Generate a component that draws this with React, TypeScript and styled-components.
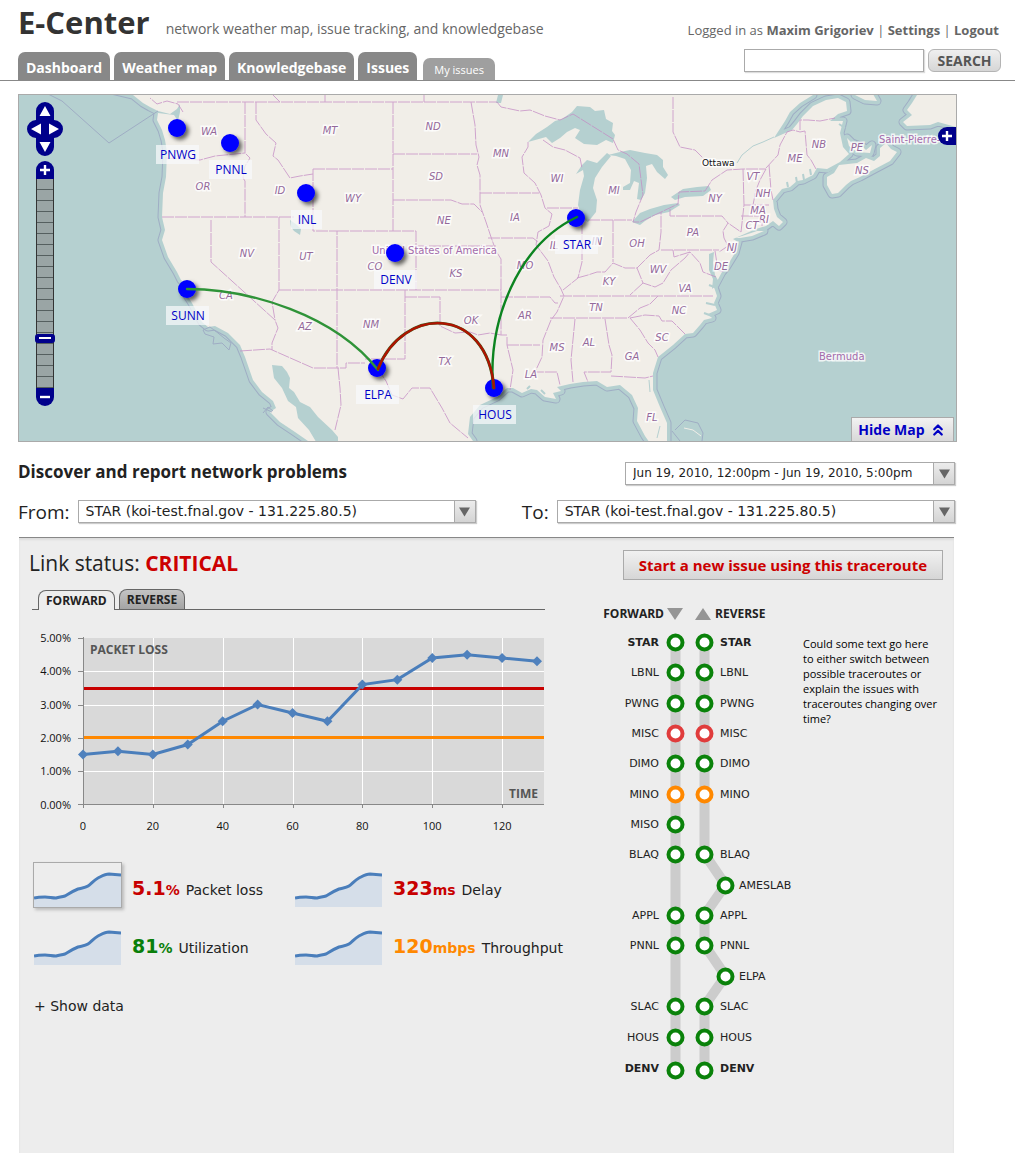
import React, { useState } from "react";
import styled, { createGlobalStyle } from "styled-components";
import { ChevronsUp } from "lucide-react";

const humanist = `"Open Sans", "Noto Sans", sans-serif`;
const wide = `"DejaVu Sans", Verdana, sans-serif`;

const GlobalStyle = createGlobalStyle`
  *, *::before, *::after { box-sizing: border-box; }
  body { margin: 0; background: #fff; color: #222; font-family: ${humanist}; }
  button, input, select { font: inherit; color: inherit; margin: 0; }
  button { cursor: pointer; }
  h1, h2, h3, p, ul { margin: 0; padding: 0; }
  svg { display: block; }
`;

/* ---------- header ---------- */

const Header = styled.header`
  display: flex;
  justify-content: space-between;
  align-items: flex-end;
  height: 81px;
  padding: 0 14px 0 18px;
  border-bottom: 1px solid #888;
`;

const BrandSide = styled.div`
  display: flex;
  flex-direction: column;
  justify-content: space-between;
  height: 80px;
`;

const Brand = styled.div`
  display: flex;
  align-items: baseline;
  gap: 16px;
`;

const Title = styled.h1`
  font-size: 31px;
  line-height: 44px;
  font-weight: 700;
  color: #333;
`;

const Tagline = styled.p`
  font-size: 14px;
  color: #666;
`;

const Nav = styled.nav`
  display: flex;
  align-items: flex-end;
  gap: 4px;
`;

const NavTab = styled.a<{ $small?: boolean }>`
  display: block;
  height: ${(p) => (p.$small ? 22 : 28)}px;
  padding: 0 ${(p) => (p.$small ? 11 : 8)}px;
  margin-left: ${(p) => (p.$small ? 2 : 0)}px;
  border-radius: 7px 7px 0 0;
  background: ${(p) => (p.$small ? "#9f9f9f" : "#888")};
  color: #fff;
  font-size: ${(p) => (p.$small ? 11 : 14)}px;
  line-height: ${(p) => (p.$small ? 24 : 32)}px;
  font-weight: ${(p) => (p.$small ? 400 : 700)};
  text-decoration: none;
`;

const AccountSide = styled.div`
  display: flex;
  flex-direction: column;
  align-items: flex-end;
  gap: 10px;
  padding-bottom: 8px;
`;

const Account = styled.div`
  padding-right: 2px;
  font-size: 13px;
  line-height: 18px;
  color: #666;
  a { color: #666; font-weight: 700; text-decoration: none; }
`;

const SearchForm = styled.form`
  display: flex;
  gap: 4px;
`;

const SearchInput = styled.input`
  width: 180px;
  height: 23px;
  padding: 0 6px;
  border: 1px solid #aaa;
  box-shadow: 1px 1px 1px #ddd;
  font-size: 13px;
`;

const SearchButton = styled.button`
  width: 73px;
  height: 23px;
  padding: 0;
  border: 1px solid #b4b4b4;
  border-radius: 6px;
  background: linear-gradient(#efefef, #d6d6d6);
  color: #555;
  font-size: 14px;
  line-height: 20px;
  font-weight: 700;
`;

/* ---------- map ---------- */

const Main = styled.main`
  padding: 13px 58px 19px 18px;
`;

const MapFrame = styled.section`
  position: relative;
  height: 348px;
  border: 1px solid #aaa;
  overflow: hidden;
  background: #b5d0d0;
`;

const MapSvg = styled.svg`
  width: 100%;
  height: 100%;
`;

const PanPad = styled.div`
  position: absolute;
  left: 8px;
  top: 7px;
`;

const ZoomStack = styled.div`
  position: absolute;
  left: 17px;
  top: 66px;
  display: flex;
  flex-direction: column;
  width: 18px;
`;

const ZoomButton = styled.button<{ $end: "top" | "bottom" }>`
  display: grid;
  place-items: center;
  height: 18px;
  padding: 0;
  border: 0;
  border-radius: ${(p) => (p.$end === "top" ? "9px 9px 0 0" : "0 0 9px 9px")};
  background: #00008b;
`;

const ZoomTrack = styled.div`
  position: relative;
  height: 209px;
  border: solid #333;
  border-width: 0 1px;
  background: repeating-linear-gradient(#9aa5a5 0 10px, #555f5f 10px 11px);
`;

const ZoomThumb = styled.div`
  position: absolute;
  left: -2px;
  top: 155px;
  width: 20px;
  height: 9px;
  border: 3px solid #00008b;
  border-radius: 3px;
  background: #fff;
  background-clip: padding-box;
  &::after {
    content: "";
    position: absolute;
    inset: 0;
    border: solid #00008b;
    border-width: 0 1px 1px;
  }
`;

const LayerButton = styled.button`
  position: absolute;
  right: 0;
  top: 32px;
  display: grid;
  place-items: center;
  width: 18px;
  height: 18px;
  padding: 0;
  border: 0;
  border-radius: 9px 0 0 9px;
  background: #00008b;
`;

const HideMap = styled.button`
  position: absolute;
  right: 2px;
  bottom: 0;
  display: flex;
  align-items: center;
  justify-content: center;
  gap: 4px;
  width: 103px;
  height: 24px;
  padding: 0;
  border: 1px solid #aaa;
  border-bottom: 0;
  background: linear-gradient(#f2f2f2, #d8d8d8);
  color: #0000c4;
  font-size: 14px;
  font-weight: 700;
`;

const LAND =
  "M-20 60 L133 95 143 103 150 107 158 111 170 114 177 109 180 104 180 112 178 121 174 115 158 113 157 120 162 130 165 140 167 152 166 177 163 193 162 217 165 230 162 240 168 257 177 272 181 280 188 285 185 292 192 303 202 322 208 327 215 326 228 333 240 345 245 357 253 380 262 392 273 401 276 408 270 412 280 422 295 432 308 441 308 480 473 480 473 441 468 434 470 417 480 405 497 397 507 388 513 388 522 393 531 389 537 390 545 397 556 399 553 393 561 391 557 387 570 384 583 382 597 381 607 387 620 385 632 395 638 408 637 421 645 436 652 446 667 446 667 423 660 407 653 390 653 373 658 357 673 345 685 334 693 333 700 325 704 320 712 318 708 314 717 310 714 303 717 296 714 287 722 272 727 266 735 253 738 242 733 239 756 229 766 226 773 221 779 226 783 222 777 217 774 209 773 200 777 195 782 189 790 187 797 181 803 180 813 175 817 168 827 169 840 162 849 154 843 147 840 133 843 121 830 121 838 114 847 111 846 102 838 98 826 100 813 106 803 116 797 124 792 130 L774 138 785 121 790 112 800 103 813 95 813 60Z";

const ISLANDS = [
  "M917 95 912 103 907 110 912 115 903 122 907 126 930 125 938 122 956 127 990 127 990 60 917 60Z",
  "M855 95 865 100 877 101 873 94Z",
  "M847 138 852 143 863 147 866 150 872 145 870 153 857 152 849 146Z",
  "M827 177 834 173 839 165 857 163 866 158 874 161 880 156 880 148 886 143 891 149 897 152 890 161 873 170 860 177 851 181 846 185 838 193 832 194 827 185Z",
  "M735 238 742 236 757 231 764 231 752 236 740 238Z",
];

const LAKES = [
  "M528 142 536 134 547 127 555 121 562 119 572 112 577 106 590 107 595 111 604 110 606 119 613 123 612 131 615 135 613 143 606 140 597 145 584 144 575 138 580 130 575 128 567 132 560 138 552 143 546 137Z",
  "M576 174 582 165 587 160 597 163 607 153 611 156 602 167 595 178 593 188 597 200 596 212 588 222 582 218 578 205 580 190 584 176 583 170Z",
  "M608 155 620 152 630 150 645 153 657 155 663 160 663 167 668 175 665 179 657 172 652 164 646 166 647 178 645 193 641 200 637 199 639 183 634 181 630 190 623 190 623 187 630 183 631 170 625 159 616 156Z",
  "M632 222 640 213 650 209 664 205 678 203 680 205 669 212 655 215 645 221 640 225Z",
  "M671 197 683 189 697 187 709 186 711 190 703 196 685 197 675 200Z",
  "M272 365 282 366 287 372 290 378 289 388 294 392 300 402 310 407 318 417 332 430 338 437 338 445 318 445 309 430 298 418 296 407 288 401 282 388 274 378Z",
  "M290 220 297 225 301 229 300 235 294 231 291 227Z",
  "M709 254 714 252 713 263 715 275 719 282 712 289 713 279 709 270Z",
  "M498 95 503 95 501 103 496 103Z",
];

const BORDERS = [
  "M177 102H497 M497 102L501 107 520 111 530 110 545 116 560 120 573 114 613 139 618 150 627 154 639 164 643 195 636 212 633 222 640 222 678 204 679 192 705 191 712 180 727 170 743 169H766",
  "M245 102V153L250 158 245 166 243 178 245 181V217 M165 158L200 160 215 156 235 154 245 153",
  "M162 217H294 M211 220V262L275 320 278 328 272 343 272 350 M279 217V290L272 302 275 320",
  "M256 102V120L266 134 276 143 273 156 278 160 290 178 300 176 313 174 M313 169V231H337V368 M313 169H393",
  "M279 290H501 M337 231H416V290 M416 246H496 M393 102V231 M393 154H477",
  "M240 351L270 349 313 368H346V363H365 M393 200H451L462 204 474 204 482 212",
  "M471 102L475 125 476 145 479 157 477 165 480 175V205L486 222 491 237 496 251 501 259V335H507",
  "M480 193H539 M488 238H533L538 242 M528 142L528 147 522 157 524 173 535 183 541 195 545 208 552 214 549 226 538 232 536 245 548 261 554 277 561 289 564 296 557 312 551 320 543 340 542 357 535 372H557L560 385",
  "M547 208H578 M543 140L553 147 565 150 580 158 582 168 M582 222V262L578 278 563 290 M588 220H632 M613 220V262",
  "M577 278L588 275 597 272 605 272 613 263 625 268 637 268 650 255 659 250 661 232V212 M661 250H719 M670 209V216H722L728 223 723 231 724 238 728 246 719 252",
  "M501 297H550L555 303H558 M507 345H540 M507 337V345L513 370 510 390 M560 296H713 M550 318H628L640 308 650 304 658 296",
  "M575 319L571 360 573 382 M605 319L609 345 612 355 611 372H584L588 382 M611 376L645 378 653 376",
  "M630 318L640 330 648 343 655 350 658 357 M630 318L645 315 659 316 662 321H672L685 334",
  "M637 268L643 283 655 287 663 283 671 270 685 258 690 252 M643 283L630 295 M673 250L674 257 690 252 700 263 703 272 716 277 M715 251L718 270 724 272",
  "M405 290V359H365 M405 297H440V326L455 333 470 332 478 335 490 333 501 335",
  "M377 368L386 381 392 395 403 399 412 388 430 388 442 408 450 423 468 438",
  "M743 169L744 205 741 232 728 223 M766 169L760 180 756 190 753 205 M769 165L771 190 773 200 M744 205H770 M741 216H762V226",
  "M766 168L778 155 780 145 787 132 793 130 800 132 805 131 807 155 811 160 816 169 M800 130V120H808L820 121 835 118",
  "M673 97V132L680 147 695 150 705 160 M273 95L280 102 M325 95V102 M424 95V102 M338 368L340 388 341 405 335 430",
  "M183 112L178 104 167 101 157 104 150 98",
];

const STATES: [string, number, number][] = [
  ["WA", 209, 131], ["MT", 330, 130], ["OR", 203, 186], ["ID", 280, 190], ["NV", 247, 253],
  ["UT", 306, 256], ["CA", 226, 295], ["AZ", 305, 326], ["WY", 353, 198], ["ND", 433, 126],
  ["SD", 436, 176], ["NE", 444, 220], ["CO", 375, 266], ["KS", 456, 273], ["NM", 371, 324],
  ["OK", 471, 320], ["TX", 445, 361], ["MN", 501, 153], ["WI", 557, 178], ["IA", 515, 217],
  ["IL", 554, 245], ["IN", 597, 241], ["MI", 614, 190], ["OH", 637, 243], ["MO", 525, 265],
  ["AR", 525, 315], ["KY", 609, 281], ["TN", 596, 307], ["MS", 557, 347], ["AL", 589, 342],
  ["GA", 632, 356], ["LA", 531, 374], ["FL", 652, 417], ["ME", 795, 158], ["NB", 819, 144],
  ["PE", 857, 147], ["NS", 862, 170], ["VT", 753, 176], ["NH", 763, 193], ["NY", 715, 198],
  ["MA", 758, 210], ["RI", 764, 219], ["CT", 752, 225], ["PA", 693, 232], ["NJ", 732, 247],
  ["DE", 721, 266], ["WV", 658, 269], ["VA", 685, 288], ["NC", 679, 310], ["SC", 662, 337],
];

const SITES: { name: string; x: number; y: number; w?: number }[] = [
  { name: "PNWG", x: 177, y: 128 },
  { name: "PNNL", x: 230, y: 143 },
  { name: "INL", x: 306, y: 193, w: 31 },
  { name: "DENV", x: 395, y: 253 },
  { name: "SUNN", x: 187, y: 289 },
  { name: "ELPA", x: 377, y: 368 },
  { name: "HOUS", x: 494, y: 388 },
  { name: "STAR", x: 576, y: 218 },
];

const StateText = styled.text`
  font: italic 10px ${wide};
  fill: #94699b;
  stroke: #fff;
  stroke-width: 3px;
  stroke-opacity: 0.8;
  paint-order: stroke;
  text-anchor: middle;
`;

const PlaceText = styled.text<{ $dark?: boolean }>`
  font: ${(p) => (p.$dark ? 9 : 10)}px ${wide};
  fill: ${(p) => (p.$dark ? "#111" : "#a36bab")};
  stroke: #fff;
  stroke-width: 3px;
  stroke-opacity: 0.8;
  paint-order: stroke;
`;

const SiteText = styled.text`
  font: 12px ${humanist};
  fill: #0000c8;
  text-anchor: middle;
`;

function NetworkMap() {
  return (
    <MapSvg viewBox="19 95 937 346" preserveAspectRatio="xMidYMid slice" role="img" aria-label="Network weather map">
      <defs>
        <filter id="drop" x="-50%" y="-50%" width="220%" height="220%">
          <feDropShadow dx="3" dy="3" stdDeviation="2" floodColor="#000" floodOpacity="0.6" />
        </filter>
      </defs>
      <g strokeLinejoin="round">
        {[LAND, ...ISLANDS].map((d) => (
          <path key={d} d={d} fill="none" stroke="#9fadc4" strokeWidth="9" />
        ))}
        {[LAND, ...ISLANDS].map((d) => (
          <path key={d} d={d} fill="#b5d0d0" stroke="#b5d0d0" strokeWidth="7" />
        ))}
        {[LAND, ...ISLANDS].map((d) => (
          <path key={d} d={d} fill="#f1eee8" />
        ))}
      </g>
      <g fill="none" stroke="#9fadc4">
        <path d="M48 94 L62 101 109 143 158 111" />
        <path d="M203 330 L210 327 218 333 224 338 231 343 229 350 222 343 213 344 214 337 205 334Z" />
        <path d="M675 430 L685 420 698 423 703 433 702 441 M672 431 680 441 M263 408 272 412 M263 413 268 407 273 411" />
      </g>
      <g fill="none" stroke="#f1eee8" strokeWidth="1">
        <path d="M684 428 L693 430 701 436" />
      </g>
      {LAKES.map((d) => (
        <path key={d} d={d} fill="#b5d0d0" />
      ))}
      <path d="M774 137 L763 142 753 146 742 155 737 163 M657 438 660 426 M650 392 649 380" fill="none" stroke="#b5d0d0" />
      <path d="M788 187 L787 182 M797 183 L796 177 M804 180 L803 174 M811 175 L810 169 M527 389 L530 386 M541 390 L545 394 M717 288 L709 285 M715 305 L706 303 M712 316 L704 313 M845 128 L839 124" fill="none" stroke="#b5d0d0" strokeWidth="2" />
      <g fill="none" stroke="#c48bc4" strokeWidth="1" strokeDasharray="12 1" opacity="0.75">
        {BORDERS.map((d) => (
          <path key={d} d={d} />
        ))}
      </g>
      {STATES.map(([name, x, y]) => (
        <StateText key={name} x={x} y={y + 4}>{name}</StateText>
      ))}
      <PlaceText x="372" y="254">United States of America</PlaceText>
      <PlaceText x="819" y="360">Bermuda</PlaceText>
      <PlaceText x="879" y="143">Saint-Pierre-</PlaceText>
      <PlaceText x="702" y="166" $dark>Ottawa</PlaceText>
      {SITES.map((s) => (
        <circle key={s.name} cx={s.x} cy={s.y} r="9" fill="#0000ff" filter="url(#drop)" />
      ))}
      <g fill="none" strokeLinecap="round">
        <path d="M187 289 C250 289 335 315 378 370" stroke="#2f9338" strokeWidth="2.4" />
        <path d="M493 388 C488 320 518 245 577 217" stroke="#0c8420" strokeWidth="2.4" />
        <path d="M378 369 C403 305 487 305 494 388" stroke="#3e5a1c" strokeWidth="3" />
        <path d="M378 369 C403 305 487 305 494 388" stroke="#b01200" strokeWidth="2.2" />
      </g>
      {SITES.map((s) => {
        const w = s.w ?? 43;
        return (
          <g key={s.name}>
            <rect x={s.x + 1 - (w + 1) / 2} y={s.y + 17} width={w} height="19" fill="#f8fafb" fillOpacity="0.72" />
            <SiteText x={s.x + 1} y={s.y + 31}>{s.name}</SiteText>
          </g>
        );
      })}
    </MapSvg>
  );
}

function SignIcon({ plus }: { plus?: boolean }) {
  return (
    <svg width="12" height="12" viewBox="0 0 12 12" aria-hidden="true">
      <path d={plus ? "M1 6H11M6 1V11" : "M1 6H11"} stroke="#fff" strokeWidth="2.4" />
    </svg>
  );
}

/* ---------- query form ---------- */

const QueryTop = styled.div`
  display: flex;
  justify-content: space-between;
  align-items: flex-start;
  margin-top: 20px;
  padding-right: 2px;
`;

const Heading = styled.h2`
  font-size: 17px;
  line-height: 20px;
  font-weight: 700;
`;

const SelectBox = styled.div<{ $width?: number }>`
  position: relative;
  height: 23px;
  width: ${(p) => (p.$width ? `${p.$width}px` : "100%")};
  border: 1px solid #aaa;
  background: #fff;
  box-shadow: 1px 1px 1px #ccc;
`;

const Select = styled.select<{ $size?: number }>`
  display: block;
  appearance: none;
  width: 100%;
  height: 21px;
  padding: 0 24px 1px 7px;
  border: 0;
  background: transparent;
  color: #222;
  font-family: ${wide};
  font-size: ${(p) => p.$size ?? 14}px;
`;

const SelectArrow = styled.span`
  position: absolute;
  right: 0;
  top: 0;
  display: grid;
  place-items: center;
  width: 21px;
  height: 21px;
  border-left: 1px solid #aaa;
  background: linear-gradient(#ececec, #d4d4d4);
  pointer-events: none;
`;

const Endpoints = styled.div`
  display: grid;
  grid-template-columns: auto 1fr auto 1fr;
  align-items: center;
  column-gap: 8px;
  margin-top: 15px;
  padding-right: 2px;
`;

const FieldLabel = styled.label<{ $spaced?: boolean }>`
  font-size: 19px;
  line-height: 22px;
  padding-left: ${(p) => (p.$spaced ? 38 : 0)}px;
`;

function Dropdown({ id, label, text, width, size }: { id: string; label?: string; text: string; width?: number; size?: number }) {
  return (
    <SelectBox $width={width}>
      <Select id={id} aria-label={label} $size={size} defaultValue={text}>
        <option>{text}</option>
      </Select>
      <SelectArrow>
        <svg width="11" height="10" viewBox="0 0 11 10" aria-hidden="true">
          <path d="M0 0.5H11L5.5 9.5Z" fill="#666" />
        </svg>
      </SelectArrow>
    </SelectBox>
  );
}

/* ---------- status panel ---------- */

const Panel = styled.section`
  margin: 14px 3px 0 1px;
  padding: 12px 11px 71px 10px;
  border-top: 1px solid #888;
  background: #ededed;
  box-shadow: inset 0 2px 2px #ddd;
`;

const PanelTop = styled.div`
  display: flex;
  justify-content: space-between;
  align-items: flex-start;
`;

const Status = styled.h2`
  font-size: 21px;
  line-height: 26px;
  font-weight: 400;
  strong { color: #c00; }
`;

const IssueButton = styled.button`
  height: 30px;
  padding: 0 15px;
  border: 1px solid #aaa;
  background: linear-gradient(#f1f1f1, #d6d6d6);
  color: #c00;
  font-size: 15px;
  line-height: 28px;
  font-weight: 700;
`;

const Columns = styled.div`
  display: grid;
  grid-template-columns: minmax(0, 1fr) 343px;
  column-gap: 28px;
  margin-top: 10px;
`;

const DataSide = styled.div`
  padding-left: 3px;
`;

const Tabs = styled.div`
  display: flex;
  align-items: flex-end;
  gap: 4px;
  max-width: 513px;
  height: 20px;
  padding-left: 6px;
  border-bottom: 1px solid #666;
`;

const Tab = styled.button<{ $active: boolean }>`
  height: 20px;
  margin-bottom: ${(p) => (p.$active ? -1 : 0)}px;
  padding: 0 7px;
  border: 1px solid #666;
  border-bottom: 0;
  border-radius: 8px 8px 0 0;
  background: ${(p) => (p.$active ? "#ededed" : "linear-gradient(#c4c4c4, #a4a4a4)")};
  font-size: 12px;
  line-height: 20px;
  font-weight: 700;
`;

const ChartSvg = styled.svg`
  width: 100%;
  max-width: 520px;
  height: auto;
  margin-top: 20px;
`;

const AxisText = styled.text<{ $end?: boolean }>`
  font: 11px ${humanist};
  fill: #111;
  text-anchor: ${(p) => (p.$end ? "end" : "middle")};
`;

const ChartTitle = styled.text<{ $end?: boolean }>`
  font: 700 12px ${humanist};
  fill: #555;
  text-anchor: ${(p) => (p.$end ? "end" : "start")};
`;

const LOSS = [1.5, 1.6, 1.5, 1.8, 2.5, 3, 2.75, 2.5, 3.6, 3.75, 4.4, 4.5, 4.4, 4.3];

function LossChart() {
  const px = (t: number) => 83 + t * 3.4923;
  const py = (v: number) => 804.5 - v * 33.3;
  const points = LOSS.map((v, i) => [px(i * 10), py(v)]);
  return (
    <ChartSvg viewBox="32 630 520 206" role="img" aria-label="Packet loss over time">
      <rect x="83" y="638" width="461" height="166" fill="#d9d9d9" />
      {[1, 2, 3, 4].map((v) => (
        <path key={v} d={`M83 ${Math.round(py(v)) + 0.5}H544`} stroke="#fff" />
      ))}
      {[20, 40, 60, 80, 100, 120].map((t) => (
        <path key={t} d={`M${Math.round(px(t)) + 0.5} 638V804`} stroke="#fff" />
      ))}
      <path d="M83 688.5H544" stroke="#c80000" strokeWidth="3" />
      <path d="M83 737.5H544" stroke="#ff8800" strokeWidth="3" />
      <path d="M83.5 637V808M78 804.5H544" stroke="#888" fill="none" />
      {[0, 1, 2, 3, 4, 5].map((v) => (
        <g key={v}>
          <path d={`M78 ${Math.round(py(v)) - 0.5 + (v ? 1 : 0)}H83`} stroke="#888" />
          <AxisText $end x="71" y={Math.round(py(v)) + 4}>{v}.00%</AxisText>
        </g>
      ))}
      {[0, 20, 40, 60, 80, 100, 120].map((t) => (
        <g key={t}>
          <path d={`M${Math.round(px(t)) + 0.5} 804V808`} stroke="#888" />
          <AxisText x={px(t)} y="830">{t}</AxisText>
        </g>
      ))}
      <polyline points={points.map((p) => p.join(",")).join(" ")} fill="none" stroke="#4a7ebb" strokeWidth="3" />
      {points.map(([x, y]) => (
        <path key={x} d={`M${x} ${y - 5}L${x + 5} ${y}L${x} ${y + 5}L${x - 5} ${y}Z`} fill="#4f81bd" />
      ))}
      <ChartTitle x="90" y="654">PACKET LOSS</ChartTitle>
      <ChartTitle $end x="538" y="798">TIME</ChartTitle>
    </ChartSvg>
  );
}

const Metrics = styled.div`
  display: grid;
  grid-template-columns: 261px 1fr;
  grid-auto-rows: 58px;
  align-items: center;
  margin-top: 20px;
  padding-left: 1px;
`;

const Metric = styled.button`
  display: flex;
  align-items: center;
  gap: 10px;
  padding: 0;
  border: 0;
  background: none;
  text-align: left;
  white-space: nowrap;
  font-family: ${wide};
  font-size: 14px;
`;

const Thumb = styled.span<{ $selected: boolean }>`
  display: flex;
  align-items: flex-end;
  width: 89px;
  height: 46px;
  border: 1px solid ${(p) => (p.$selected ? "#aaa" : "transparent")};
  box-shadow: ${(p) => (p.$selected ? "2px 2px 3px #bbb" : "none")};
`;

const MetricText = styled.span`
  display: flex;
  align-items: baseline;
  gap: 6px;
  padding-top: 8px;
`;

const Value = styled.strong<{ $color: string }>`
  color: ${(p) => p.$color};
  font-size: 19px;
  line-height: 22px;
  small { font-size: 14px; }
`;

const METRICS = [
  { value: "5.1", unit: "%", name: "Packet loss", color: "#c80000" },
  { value: "323", unit: "ms", name: "Delay", color: "#c80000" },
  { value: "81", unit: "%", name: "Utilization", color: "#0a7f0a" },
  { value: "120", unit: "mbps", name: "Throughput", color: "#ff8800" },
];

function Spark() {
  return (
    <svg width="87" height="36" viewBox="0 0 87 36" aria-hidden="true">
      <path d="M0 27L11 26 22 27 31 25 44 18 54 15 64 7 75 3 87 4V36H0Z" fill="#d5dee9" />
      <path d="M0 27C4 26 8 26 11 26C15 26 18 27 22 27C26 26 28 26 31 25C36 22 39 20 44 18C47 17 51 17 54 15C57 13 60 9 64 7C68 5 71 3 75 3L87 4" fill="none" stroke="#4a7ebb" strokeWidth="3" />
    </svg>
  );
}

const ShowData = styled.button`
  margin-top: 24px;
  padding: 0 2px;
  border: 0;
  background: none;
  font-family: ${wide};
  font-size: 14px;
  line-height: 20px;
`;

const RouteSide = styled.div`
  display: flex;
  gap: 8px;
  padding-top: 12px;
`;

const RouteSvg = styled.svg`
  flex: none;
`;

const Note = styled.p`
  width: 136px;
  margin-top: 34px;
  color: #000;
  font-size: 11px;
  line-height: 15px;
`;

const RouteHead = styled.text<{ $end?: boolean }>`
  font: 700 12px ${humanist};
  fill: #222;
  text-anchor: ${(p) => (p.$end ? "end" : "start")};
`;

const HopText = styled.text<{ $end?: boolean; $bold?: boolean }>`
  font: ${(p) => (p.$bold ? 700 : 400)} 11px ${wide};
  fill: #222;
  text-anchor: ${(p) => (p.$end ? "end" : "start")};
`;

type Hop = { name: string; y: number; forward?: boolean; reverse?: boolean; off?: boolean; color?: string; bold?: boolean };

const HOPS: Hop[] = [
  { name: "STAR", y: 642, forward: true, reverse: true, bold: true },
  { name: "LBNL", y: 672, forward: true, reverse: true },
  { name: "PWNG", y: 703, forward: true, reverse: true },
  { name: "MISC", y: 733, forward: true, reverse: true, color: "#e03c3c" },
  { name: "DIMO", y: 763, forward: true, reverse: true },
  { name: "MINO", y: 794, forward: true, reverse: true, color: "#ff8800" },
  { name: "MISO", y: 824, forward: true },
  { name: "BLAQ", y: 854, forward: true, reverse: true },
  { name: "AMESLAB", y: 885, reverse: true, off: true },
  { name: "APPL", y: 915, forward: true, reverse: true },
  { name: "PNNL", y: 945, forward: true, reverse: true },
  { name: "ELPA", y: 976, reverse: true, off: true },
  { name: "SLAC", y: 1006, forward: true, reverse: true },
  { name: "HOUS", y: 1037, forward: true, reverse: true },
  { name: "DENV", y: 1070, forward: true, reverse: true, bold: true },
];

function RouteDiagram() {
  const revX = (h: Hop) => (h.off ? 725.5 : 704.5);
  const reversePath = HOPS.filter((h) => h.reverse).map((h) => `${revX(h)},${h.y}`).join(" ");
  return (
    <RouteSvg width="195" height="480" viewBox="600 602 195 480" role="img" aria-label="Forward and reverse traceroute">
      <RouteHead $end x="664" y="618">FORWARD</RouteHead>
      <path d="M667 608H683L675 620Z M695 620H711L703 608Z" fill="#959595" />
      <RouteHead x="715" y="618">REVERSE</RouteHead>
      <g fill="none" stroke="#ccc" strokeWidth="10">
        <path d="M675.5 642V1070" />
        <polyline points={reversePath} />
      </g>
      {HOPS.map((h) => {
        const color = h.color ?? "#0a820a";
        const base = h.y + (h.bold && h.y > 1000 ? 2 : 4);
        return (
          <g key={h.name}>
            {h.forward && (
              <>
                <HopText $end $bold={h.bold} x="659" y={base}>{h.name}</HopText>
                <circle cx="675.5" cy={h.y + 0.5} r="7" fill="#fff" stroke={color} strokeWidth="4" />
              </>
            )}
            {h.reverse && (
              <>
                <circle cx={revX(h)} cy={h.y + 0.5} r="7" fill="#fff" stroke={color} strokeWidth="4" />
                <HopText $bold={h.bold} x={h.off ? 739 : 720} y={base}>{h.name}</HopText>
              </>
            )}
          </g>
        );
      })}
    </RouteSvg>
  );
}

export default function App() {
  const [tab, setTab] = useState("FORWARD");
  const [metric, setMetric] = useState("Packet loss");
  return (
    <>
      <GlobalStyle />
      <Header>
        <BrandSide>
          <Brand>
            <Title>E-Center</Title>
            <Tagline>network weather map, issue tracking, and knowledgebase</Tagline>
          </Brand>
          <Nav>
            <NavTab href="#dashboard">Dashboard</NavTab>
            <NavTab href="#weather">Weather map</NavTab>
            <NavTab href="#knowledge">Knowledgebase</NavTab>
            <NavTab href="#issues">Issues</NavTab>
            <NavTab href="#mine" $small>My issues</NavTab>
          </Nav>
        </BrandSide>
        <AccountSide>
          <Account>
            Logged in as <a href="#profile">Maxim Grigoriev</a> | <a href="#settings">Settings</a> | <a href="#logout">Logout</a>
          </Account>
          <SearchForm onSubmit={(e) => e.preventDefault()}>
            <SearchInput type="search" aria-label="Search" />
            <SearchButton type="submit">SEARCH</SearchButton>
          </SearchForm>
        </AccountSide>
      </Header>
      <Main>
        <MapFrame>
          <NetworkMap />
          <PanPad>
            <svg width="36" height="54" viewBox="0 0 36 54" role="img" aria-label="Pan map">
              <path d="M9 18V9a9 9 0 0 1 18 0V18a9 9 0 0 1 0 18V45a9 9 0 0 1-18 0V36a9 9 0 0 1 0-18Z" fill="#00008b" />
              <path d="M18 4L23.500 14H12.500Z M18 50L12.500 40H23.500Z M4 27L14 21.500V32.500Z M32 27L22 21.500V32.500Z" fill="#fff" />
            </svg>
          </PanPad>
          <ZoomStack>
            <ZoomButton $end="top" aria-label="Zoom in"><SignIcon plus /></ZoomButton>
            <ZoomTrack><ZoomThumb /></ZoomTrack>
            <ZoomButton $end="bottom" aria-label="Zoom out"><SignIcon /></ZoomButton>
          </ZoomStack>
          <LayerButton aria-label="Layers"><SignIcon plus /></LayerButton>
          <HideMap>Hide Map <ChevronsUp size={18} strokeWidth={3} aria-hidden="true" /></HideMap>
        </MapFrame>

        <QueryTop>
          <Heading>Discover and report network problems</Heading>
          <Dropdown id="period" label="Period" width={330} size={12} text="Jun 19, 2010, 12:00pm - Jun 19, 2010, 5:00pm" />
        </QueryTop>
        <Endpoints>
          <FieldLabel htmlFor="from">From:</FieldLabel>
          <Dropdown id="from" text="STAR (koi-test.fnal.gov - 131.225.80.5)" />
          <FieldLabel htmlFor="to" $spaced>To:</FieldLabel>
          <Dropdown id="to" text="STAR (koi-test.fnal.gov - 131.225.80.5)" />
        </Endpoints>

        <Panel>
          <PanelTop>
            <Status>Link status: <strong>CRITICAL</strong></Status>
            <IssueButton>Start a new issue using this traceroute</IssueButton>
          </PanelTop>
          <Columns>
            <DataSide>
              <Tabs>
                {["FORWARD", "REVERSE"].map((t) => (
                  <Tab key={t} $active={t === tab} onClick={() => setTab(t)}>{t}</Tab>
                ))}
              </Tabs>
              <LossChart />
              <Metrics>
                {METRICS.map((m) => (
                  <Metric key={m.name} onClick={() => setMetric(m.name)}>
                    <Thumb $selected={m.name === metric}><Spark /></Thumb>
                    <MetricText>
                      <Value $color={m.color}>{m.value}<small>{m.unit}</small></Value>
                      {m.name}
                    </MetricText>
                  </Metric>
                ))}
              </Metrics>
              <ShowData>+ Show data</ShowData>
            </DataSide>
            <RouteSide>
              <RouteDiagram />
              <Note>Could some text go here to either switch between possible traceroutes or explain the issues with traceroutes changing over time?</Note>
            </RouteSide>
          </Columns>
        </Panel>
      </Main>
    </>
  );
}
